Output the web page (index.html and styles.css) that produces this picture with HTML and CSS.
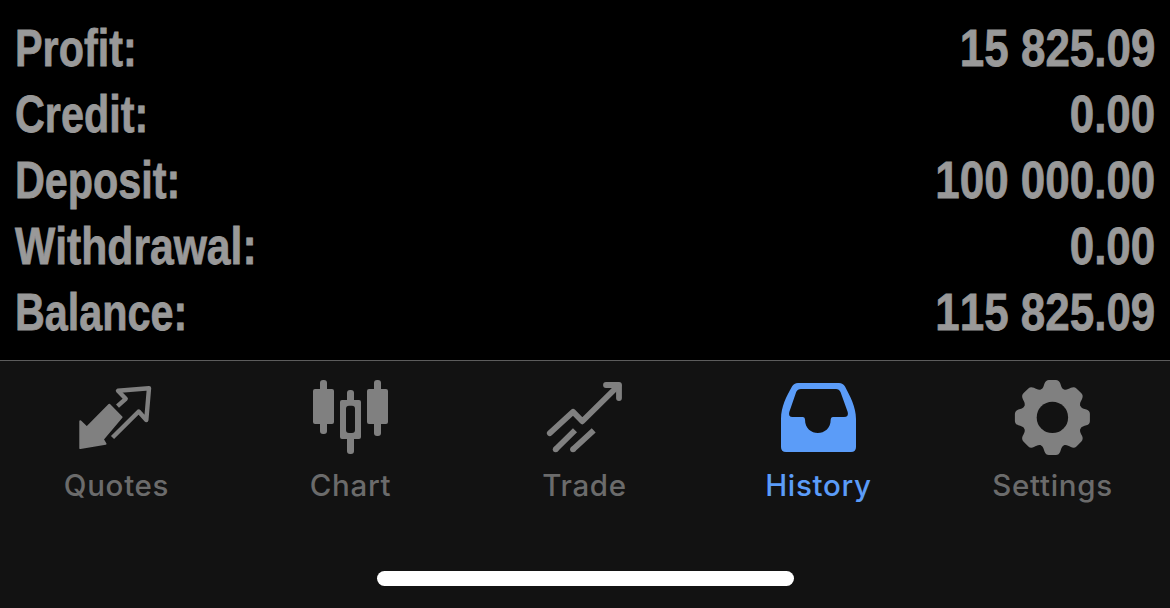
FILE: index.html
```html
<!DOCTYPE html>
<html lang="en">
<head>
    <meta charset="UTF-8">
    <meta name="viewport" content="width=device-width, initial-scale=1.0">
    <title>History</title>
    <link rel="stylesheet" href="styles.css">
</head>
<body>

<div class="summary">
    <div class="row"><span class="name">Profit:</span><span class="value">15 825.09</span></div>
    <div class="row"><span class="name">Credit:</span><span class="value">0.00</span></div>
    <div class="row"><span class="name">Deposit:</span><span class="value">100 000.00</span></div>
    <div class="row"><span class="name wide">Withdrawal:</span><span class="value">0.00</span></div>
    <div class="row"><span class="name">Balance:</span><span class="value">115 825.09</span></div>
</div>

<div class="footer">
    <div class="tabs">
        <div class="tab">
            <svg class="icon" viewBox="0 0 80 80">
                <path class="fill round" d="M3.3 43.2L9.8 49.4L32.3 26.8L44.6 39.2L25.8 61.3L28.5 65.8L3.3 70Z"/>
                <path class="line thin" d="M40.5 28.2L48.7 20.8L41 12.8L72 10.3L69.3 42L61.7 33.5L35.5 59.5"/>
            </svg>
            <span class="label">Quotes</span>
        </div>
        <div class="tab">
            <svg class="icon" viewBox="0 0 80 80">
                <rect class="fill" x="9" y="2" width="7" height="54" rx="3"/>
                <rect class="fill" x="2" y="11" width="21" height="35" rx="2"/>
                <rect class="fill" x="36" y="12" width="7" height="15" rx="3"/>
                <rect class="fill" x="36" y="56" width="7" height="20" rx="3"/>
                <path class="fill" fill-rule="evenodd" d="M31 22H48Q50 22 50 24V59Q50 61 48 61H31Q29 61 29 59V24Q29 22 31 22ZM38 27.7Q35 27.7 35 30.7V52Q35 55 38 55H41Q44 55 44 52V30.7Q44 27.7 41 27.7Z"/>
                <rect class="fill" x="63" y="2" width="7" height="56" rx="3"/>
                <rect class="fill" x="56" y="11" width="21" height="35" rx="2"/>
            </svg>
            <span class="label">Chart</span>
        </div>
        <div class="tab">
            <svg class="icon" viewBox="0 0 80 80">
                <path class="line" d="M4.8 55.2L28 33.8L37.3 43.3L73.5 7.5"/>
                <path class="line" d="M61 7H74V20"/>
                <path class="line flat" d="M10.7 71.3L30 52.3M28 71.3L48.7 52.3"/>
                <circle class="fill" cx="10.7" cy="71.3" r="2.9"/>
                <circle class="fill" cx="28" cy="71.3" r="2.9"/>
            </svg>
            <span class="label">Trade</span>
        </div>
        <div class="tab active">
            <svg class="icon" viewBox="0 0 80 80">
                <path class="fill" fill-rule="evenodd" d="M19 5H60Q64 5 66 8.5C71 18 77 29 77 41V69Q77 74 72 74H7Q2 74 2 69V41C2 29 7.5 18 13 8.5Q15 5 19 5ZM22 11Q18.5 11 17.2 14L10.3 34Q9 39 13.5 39H24Q26 39 26 41.5C26 59.5 51.7 59.5 51.7 41.5Q51.7 39 53.7 39H65Q70 39 68.7 34L61.5 14Q60 11 57 11Z"/>
            </svg>
            <span class="label">History</span>
        </div>
        <div class="tab">
            <svg class="icon" viewBox="0 0 80 80">
                <defs>
                    <path id="tooth" d="M-11.5 -27.8C-9 -29.3 -8.8 -31.5 -7.9 -34Q-6.6 -37.5 -3.5 -37.5H3.5Q6.6 -37.5 7.9 -34C8.8 -31.5 9 -29.3 11.5 -27.8L0 0Z"/>
                </defs>
                <g class="fill" transform="translate(39.4 39.4)">
                    <use href="#tooth"/>
                    <use href="#tooth" transform="rotate(45)"/>
                    <use href="#tooth" transform="rotate(90)"/>
                    <use href="#tooth" transform="rotate(135)"/>
                    <use href="#tooth" transform="rotate(180)"/>
                    <use href="#tooth" transform="rotate(225)"/>
                    <use href="#tooth" transform="rotate(270)"/>
                    <use href="#tooth" transform="rotate(315)"/>
                    <circle r="30"/>
                    <circle class="hole" r="15.7"/>
                </g>
            </svg>
            <span class="label">Settings</span>
        </div>
    </div>
    <div class="home_bar"></div>
</div>

</body>
</html>
```
FILE: styles.css
```css
* {
    box-sizing: border-box;
}

body {
    margin: 0;
    height: 608px;
    overflow: hidden;
    background-color: #000000;
    display: flex;
    flex-direction: column;
}

.summary {
    height: 360px;
    padding: 15px 15px 0 15px;
    color: #999999;
    font-family: "Liberation Sans", Arial, sans-serif;
    font-size: 52px;
    font-weight: bold;
    font-kerning: none;
    -webkit-text-stroke: 0.8px #999999;
}

.row {
    height: 66px;
    line-height: 66px;
    display: flex;
    justify-content: space-between;
    white-space: nowrap;
}

/* condensed look */
.name {
    transform: scaleX(0.795);
    transform-origin: left;
}

.wide {
    transform: scaleX(0.82);
}

.value {
    transform: scaleX(0.845);
    transform-origin: right;
}

.footer {
    height: 248px;
    background-color: #121212;
    border-top: 1px solid #5c5c5c;
}

.tabs {
    display: flex;
    height: 210px;
    padding-top: 17px;
}

.tab {
    width: 20%;
    display: flex;
    flex-direction: column;
    align-items: center;
    color: #6b6b6b;
    --icon: #808080;
}

.active {
    color: #5b9cf8;
    --icon: #5b9cf8;
}

.icon {
    width: 80px;
    height: 80px;
}

.fill {
    fill: var(--icon);
}

.round {
    stroke: var(--icon);
    stroke-width: 2;
    stroke-linejoin: round;
}

.line {
    fill: none;
    stroke: var(--icon);
    stroke-width: 5.8;
    stroke-linecap: round;
    stroke-linejoin: round;
}

.thin {
    stroke-width: 4.4;
    stroke-linecap: butt;
}

.flat {
    stroke-linecap: butt;
}

.hole {
    fill: #121212;
}

.label {
    margin-top: 9px;
    margin-left: -1px;
    font-family: Inter, sans-serif;
    font-size: 29.5px;
    font-weight: 500;
    line-height: 36px;
    letter-spacing: 0.7px;
}

.home_bar {
    width: 417px;
    height: 15px;
    margin: 0 auto;
    border-radius: 8px;
    background-color: #ffffff;
}
```
